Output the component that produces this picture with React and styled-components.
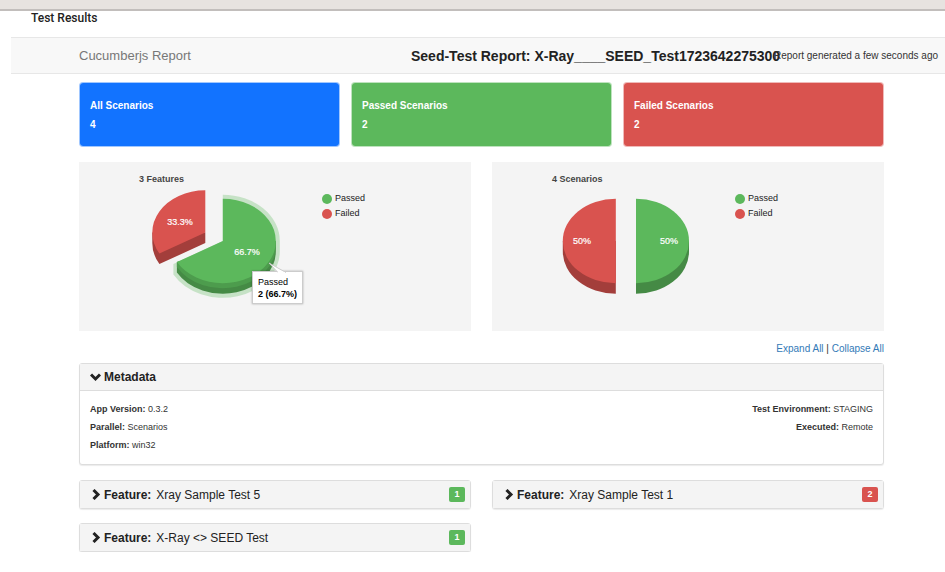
import React from "react";
import styled, { createGlobalStyle } from "styled-components";

const colors = {
  blue: "#1273ff",
  green: "#5cb85c",
  greenSide: "#458a45",
  greenEdge: "#4d9c4d",
  red: "#d9534f",
  redSide: "#a33e3b",
  text: "#333",
  line: "#ddd",
};

const GlobalStyle = createGlobalStyle`
  * { box-sizing: border-box; }
  body {
    margin: 0;
    background: #fff;
    color: ${colors.text};
    font: 10px/18px "Liberation Sans", Arial, sans-serif;
  }
  h1, h2, h3, p, dl, dd, figure { margin: 0; }
  button { font: inherit; color: inherit; border: 0; background: none; cursor: pointer; }
`;

const WindowEdge = styled.div`
  height: 11px;
  background: #e7e3e0;
  border-bottom: 2px solid #c2bebc;
`;

const PageTitle = styled.h1`
  padding: 0 31px;
  height: 26px;
  font: 500 12px/15px Roboto, sans-serif;
  color: #222;
`;

const Navbar = styled.header`
  display: grid;
  grid-template-columns: 332px minmax(0, 1fr) auto;
  align-items: center;
  height: 37px;
  margin-left: 11px;
  padding: 0 7px 0 68px;
  background: #f8f8f8;
  border: solid #e7e7e7;
  border-width: 1px 0;
  white-space: nowrap;
`;

const Brand = styled.span`
  font-size: 13px;
  color: #777;
`;

const ReportName = styled.h2`
  font-size: 14px;
  color: #222;
`;

const Main = styled.main`
  margin: 8px 61px 0 79px;
`;

const Summary = styled.section`
  display: grid;
  grid-template-columns: repeat(3, 1fr);
  gap: 11px;
`;

const SummaryCard = styled.article`
  padding: 13px 10px 12px;
  border: 1px solid ${(p) => p.$color}66;
  border-radius: 4px;
  background: ${(p) => p.$color};
  background-clip: padding-box;
  color: #fff;
  font-weight: bold;
  line-height: 19px;
`;

const CardTitle = styled.h3`
  font-size: 10px;
`;

const Columns = styled.div`
  display: grid;
  grid-template-columns: repeat(2, 1fr);
  gap: 14px 21px;
  margin-top: 15px;
`;

const ChartPanel = styled.section`
  display: flex;
  gap: 13px;
  padding: 8px 12px 24px 60px;
  background: #f4f4f4;
  font-size: 9px;
`;

const ChartTitle = styled.h3`
  font-size: 9px;
  color: #444;
`;

const Figure = styled.figure`
  position: relative;
  width: 170px;
  height: 119px;
  flex: none;
`;

const Pie = styled.svg`
  display: block;
  width: 170px;
  height: 119px;
  font-size: 9px;
  text-anchor: middle;
`;

const Legend = styled.ul`
  list-style: none;
  margin: 21px 0 0;
  padding: 0;
  line-height: 15px;
  color: #222;
`;

const LegendItem = styled.li`
  display: flex;
  align-items: center;
  gap: 3px;
  &::before {
    content: "";
    width: 10px;
    height: 10px;
    border-radius: 50%;
    background: ${(p) => p.$color};
  }
`;

const Tooltip = styled.div`
  position: absolute;
  left: 113px;
  top: 83px;
  padding: 4px 5px 3px;
  background: #fff;
  border: 1px solid #ccc;
  box-shadow: 0 0 2px rgba(0, 0, 0, 0.3);
  color: #000;
  line-height: 12px;
  white-space: nowrap;
`;

const Pointer = styled.svg`
  position: absolute;
  left: 15px;
  top: -10px;
  width: 20px;
  height: 11px;
`;

const Toolbar = styled.nav`
  margin: 9px 0 5px;
  text-align: right;
`;

const TextLink = styled.a`
  color: #337ab7;
  text-decoration: none;
`;

const Panel = styled.section`
  border: 1px solid ${colors.line};
  border-radius: 3px;
  box-shadow: 0 1px 1px rgba(0, 0, 0, 0.08);
  background: #fff;
`;

const PanelToggle = styled.button`
  display: flex;
  align-items: center;
  width: 100%;
  height: 27px;
  padding: 0 5px 0 10px;
  background: #f4f4f4;
  border-bottom: ${(p) => (p.$open ? `1px solid ${colors.line}` : "0")};
  font-size: 12px;
  text-align: left;
  color: #222;
`;

const Chevron = styled.svg`
  width: 11px;
  height: 11px;
  margin-right: 3px;
  fill: none;
  stroke: currentColor;
  stroke-width: 3;
`;

const FeatureName = styled.span`
  margin-left: 5px;
  flex: 1;
`;

const Badge = styled.span`
  width: 16px;
  border-radius: 2px;
  background: ${(p) => p.$color};
  color: #fff;
  font: bold 9px/15px "Liberation Sans", Arial, sans-serif;
  text-align: center;
`;

const MetaBody = styled.div`
  display: flex;
  justify-content: space-between;
  padding: 9px 10px 10px;
  font-size: 9px;
`;

const MetaList = styled.dl`
  text-align: ${(p) => p.$align};
`;

const MetaRow = styled.div`
  dt, dd { display: inline; }
  dt { font-weight: bold; }
`;

const ToggleIcon = ({ open }) => (
  <Chevron viewBox="0 0 11 11" aria-hidden="true">
    <path d={open ? "M1 2.5 5.5 7 10 2.5" : "M3.5 1 8 5.5 3.5 10"} />
  </Chevron>
);

const FeaturesPie = () => (
  <Pie viewBox="139 188 170 119" role="img" aria-label="Features: 66.7% passed, 33.3% failed">
    <path
      fill={colors.green}
      opacity=".3"
      d="M222.8 241V194.8A57 46.2 0 0 1 279.8 241V251.5A57 46.2 0 0 1 173.4 274.6V264.1Z"
    />
    <path
      fill={colors.greenSide}
      d="M275.8 241V251.5A53 42.2 0 0 1 176.9 272.6V262.1Z"
    />
    <path
      fill={colors.greenEdge}
      d="M275.8 241V246A53 42.2 0 0 1 176.9 267.1V262.1Z"
    />
    <path fill={colors.green} d="M222.8 241V198.8A53 42.2 0 1 1 176.9 262.1Z" />
    <path
      fill={colors.redSide}
      d="M152.3 232.5V243A53 42.2 0 0 0 159.4 264.1L205.3 243V232.5Z"
    />
    <path fill={colors.red} d="M205.3 232.5V190.3A53 42.2 0 0 0 159.4 253.6Z" />
    <g fill="#fff" stroke="#fff" strokeWidth=".2">
      <text x="180" y="225">33.3%</text>
      <text x="247" y="255">66.7%</text>
    </g>
  </Pie>
);

const ScenariosPie = () => (
  <Pie viewBox="552 188 170 119" role="img" aria-label="Scenarios: 50% passed, 50% failed">
    <path fill={colors.redSide} d="M562.8 241V251.5A53 42.2 0 0 0 615.8 293.7V241Z" />
    <path fill={colors.red} d="M615.8 198.8A53 42.2 0 0 0 615.8 283.2Z" />
    <path fill={colors.greenSide} d="M689 241V251.5A53 42.2 0 0 1 636 293.7V241Z" />
    <path fill={colors.green} d="M636 198.8A53 42.2 0 0 1 636 283.2Z" />
    <g fill="#fff" stroke="#fff" strokeWidth=".2">
      <text x="582" y="244">50%</text>
      <text x="669" y="244">50%</text>
    </g>
  </Pie>
);

const Chart = ({ title, children }) => (
  <ChartPanel>
    <div>
      <ChartTitle>{title}</ChartTitle>
      <Figure>{children}</Figure>
    </div>
    <Legend>
      <LegendItem $color={colors.green}>Passed</LegendItem>
      <LegendItem $color={colors.red}>Failed</LegendItem>
    </Legend>
  </ChartPanel>
);

const Metadata = ({ items, align }) => (
  <MetaList $align={align}>
    {items.map(([name, value]) => (
      <MetaRow key={name}>
        <dt>{name}:</dt> <dd>{value}</dd>
      </MetaRow>
    ))}
  </MetaList>
);

const Feature = ({ name, count, color }) => (
  <Panel>
    <PanelToggle type="button" aria-expanded="false">
      <ToggleIcon />
      <b>Feature:</b>
      <FeatureName>{name}</FeatureName>
      <Badge $color={color}>{count}</Badge>
    </PanelToggle>
  </Panel>
);

export default function App() {
  return (
    <>
      <GlobalStyle />
      <WindowEdge />
      <PageTitle>Test Results</PageTitle>
      <Navbar>
        <Brand>Cucumberjs Report</Brand>
        <ReportName>Seed-Test Report: X-Ray____SEED_Test1723642275300</ReportName>
        <p>Report generated a few seconds ago</p>
      </Navbar>
      <Main>
        <Summary>
          <SummaryCard $color={colors.blue}>
            <CardTitle>All Scenarios</CardTitle>
            <p>4</p>
          </SummaryCard>
          <SummaryCard $color={colors.green}>
            <CardTitle>Passed Scenarios</CardTitle>
            <p>2</p>
          </SummaryCard>
          <SummaryCard $color={colors.red}>
            <CardTitle>Failed Scenarios</CardTitle>
            <p>2</p>
          </SummaryCard>
        </Summary>
        <Columns>
          <Chart title="3 Features">
            <FeaturesPie />
            <Tooltip role="tooltip">
              <Pointer viewBox="0 0 20 11" aria-hidden="true">
                <path d="M10 10.5 1 1 18 10.5" fill="#fff" stroke="#ccc" />
                <path d="M10 10h7v1h-7z" fill="#fff" />
              </Pointer>
              <p>Passed</p>
              <b>2 (66.7%)</b>
            </Tooltip>
          </Chart>
          <Chart title="4 Scenarios">
            <ScenariosPie />
          </Chart>
        </Columns>
        <Toolbar>
          <TextLink href="#expand">Expand All</TextLink> | <TextLink href="#collapse">Collapse All</TextLink>
        </Toolbar>
        <Panel>
          <PanelToggle type="button" aria-expanded="true" $open>
            <ToggleIcon open />
            <b>Metadata</b>
          </PanelToggle>
          <MetaBody>
            <Metadata
              align="left"
              items={[["App Version", "0.3.2"], ["Parallel", "Scenarios"], ["Platform", "win32"]]}
            />
            <Metadata
              align="right"
              items={[["Test Environment", "STAGING"], ["Executed", "Remote"]]}
            />
          </MetaBody>
        </Panel>
        <Columns>
          <Feature name="Xray Sample Test 5" count="1" color={colors.green} />
          <Feature name="Xray Sample Test 1" count="2" color={colors.red} />
          <Feature name="X-Ray <> SEED Test" count="1" color={colors.green} />
        </Columns>
      </Main>
    </>
  );
}
